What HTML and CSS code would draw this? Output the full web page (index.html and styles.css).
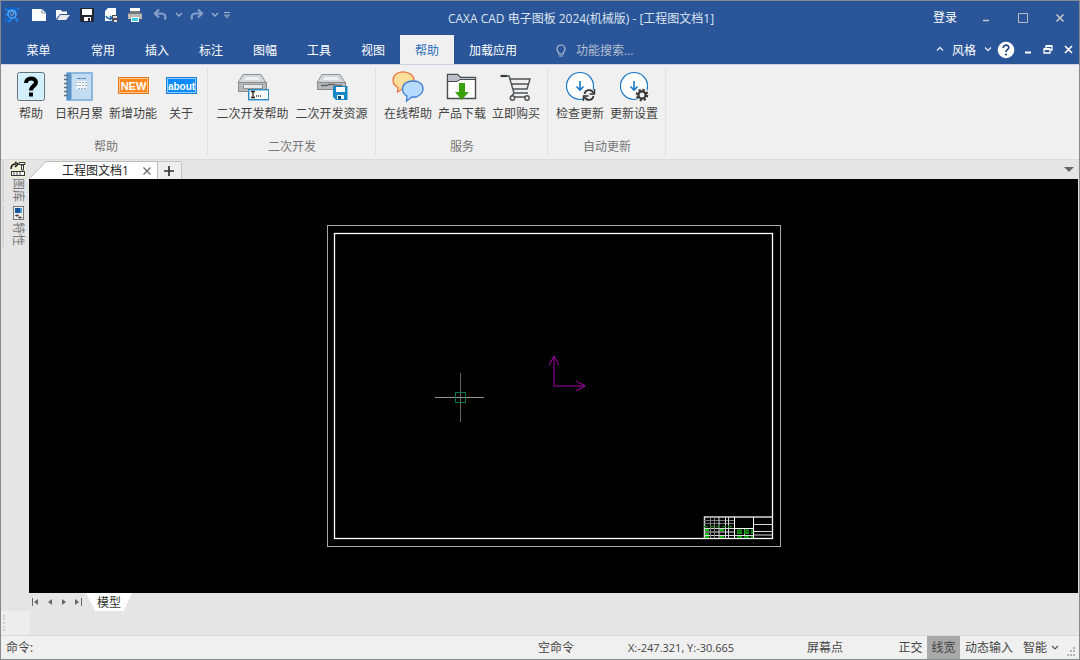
FILE: index.html
```html
<!DOCTYPE html>
<html lang="zh-CN">
<head>
<meta charset="utf-8">
<title>CAXA CAD 电子图板 2024(机械版)</title>
<link rel="stylesheet" href="styles.css">
</head>
<body>
<div class="window">
  <header class="titlebar">
    <svg class="app-logo" viewBox="0 0 16 16" width="16" height="16"><g fill="none" stroke="#1787f5" stroke-width="1.600"><path d="M1 2l5 2M1 8l4-1M1 14l5-4M14 15l-3-5M8 12l-4 3M15 2l-4 1"/><circle cx="8" cy="7" r="4" stroke="#48a8ff"/><path d="M6 6c1-2 4-2 4 0s-3 3-4 1" stroke="#8fd0ff" stroke-width="1"/><path d="M4 2c3-2 8-1 9 2M5 10l-3 3" stroke="#0a5fd0"/></g></svg>
    <nav class="quick">
      <button aria-label="新建"><svg viewBox="0 0 16 16" width="16" height="16"><path d="M1 2h10l4 4v8H1z" fill="#fff"/><path d="M11 2v4h4" fill="none" stroke="#7d8da8"/></svg></button>
      <button aria-label="打开"><svg viewBox="0 0 16 16" width="16" height="16"><path d="M1 3h5l1 1.500h5V7H5L1 12z" fill="#fff"/><path d="M5 8h10l-4 5H2z" fill="#e8e8e8"/></svg></button>
      <button aria-label="保存"><svg viewBox="0 0 16 16" width="16" height="16"><path d="M1 1h14v14H2l-1-1z" fill="#222831"/><path d="M3 2h10v6H3zM5 10h7v4H5z" fill="#fff"/><path d="M9 11h2v3H9z" fill="#222831"/></svg></button>
      <button aria-label="另存为"><svg viewBox="0 0 16 16" width="16" height="16"><path d="M2 4l3-3h8v13H2z" fill="#fff"/><path d="M3 9c1 3 4 3 5 2M7 9l2 2-2 2" fill="none" stroke="#1b67b5" stroke-width="1.500"/><path d="M9 8h6v7H9z" fill="#4a4f58"/><path d="M10 9h4v2h-4zM11 13h3v2h-3z" fill="#ddd"/></svg></button>
      <button aria-label="打印"><svg viewBox="0 0 16 16" width="16" height="16"><path d="M3 1h10v5H3z" fill="#fff"/><path d="M1 6h14v6H1z" fill="#b8b8b5"/><path d="M1 6h2V4h10v2h2v1H1z" fill="#777b80"/><path d="M4 10h8v5H4z" fill="#fff"/><path d="M5 11h6v3H5z" fill="#38cdea"/></svg></button>
      <button class="arrow" aria-label="撤销"><svg viewBox="0 0 16 16" width="16" height="16"><path d="M7 2.500L3 6.500l4 4" fill="none" stroke="#869fc9" stroke-width="2.200"/><path d="M3 6.500h6c4 0 5 2 4 6" fill="none" stroke="#869fc9" stroke-width="2.200"/></svg></button>
      <button class="narrow" aria-label="撤销列表"><svg viewBox="0 0 8 8" width="8" height="8"><path d="M1 2l3 3 3-3" fill="none" stroke="#9cb0d1" stroke-width="1.300"/></svg></button>
      <button aria-label="重做"><svg viewBox="0 0 16 16" width="16" height="16"><path d="M9 2.500l4 4-4 4" fill="none" stroke="#869fc9" stroke-width="2.200"/><path d="M13 6.500H7c-4 0-5 2-4 6" fill="none" stroke="#869fc9" stroke-width="2.200"/></svg></button>
      <button class="narrow" aria-label="重做列表"><svg viewBox="0 0 8 8" width="8" height="8"><path d="M1 2l3 3 3-3" fill="none" stroke="#9cb0d1" stroke-width="1.300"/></svg></button>
      <button class="narrow" aria-label="自定义"><svg viewBox="0 0 8 8" width="8" height="8"><path d="M1 1.500h6" stroke="#a9b3c5"/><path d="M1.500 4h5L4 7z" fill="none" stroke="#a9b3c5"/></svg></button>
    </nav>
    <h1 class="title">CAXA CAD 电子图板 2024(机械版) - [工程图文档1]</h1>
    <div class="window-buttons">
      <button class="login">登录</button>
      <button class="win" aria-label="最小化"><svg viewBox="0 0 12 12" width="12" height="12"><path d="M3 8.500h6" stroke="#c9c9c6" stroke-width="1.500"/></svg></button>
      <button class="win" aria-label="最大化"><svg viewBox="0 0 12 12" width="12" height="12"><path d="M1.500 1.500h9v9h-9z" fill="none" stroke="#b9bcc0"/></svg></button>
      <button class="win" aria-label="关闭"><svg viewBox="0 0 12 12" width="12" height="12"><path d="M2.500 2.500l7 7M9.500 2.500l-7 7" stroke="#c9c9c6" stroke-width="1.500"/></svg></button>
    </div>
  </header>

  <nav class="menubar">
    <button class="tab main">菜单</button>
    <button class="tab">常用</button>
    <button class="tab">插入</button>
    <button class="tab">标注</button>
    <button class="tab">图幅</button>
    <button class="tab">工具</button>
    <button class="tab">视图</button>
    <button class="tab active">帮助</button>
    <button class="tab wide">加载应用</button>
    <label class="search">
      <svg viewBox="0 0 12 14" width="12" height="14"><path d="M4 10c0-2-2-2.500-2-5a4 4 0 0 1 8 0c0 2.500-2 3-2 5zM4 12h4" fill="none" stroke="#b5bfd0" stroke-width="1.200"/></svg>
      <input type="text" placeholder="功能搜索..." aria-label="功能搜索">
    </label>
    <div class="menu-right">
      <button aria-label="折叠功能区"><svg viewBox="0 0 8 8" width="8" height="8"><path d="M1 4.500l3-3 3 3" fill="none" stroke="#dfe6f2" stroke-width="1.300"/></svg></button>
      <button class="style-button">风格</button>
      <button aria-label="风格列表"><svg viewBox="0 0 8 8" width="8" height="8"><path d="M1 1.500l3 3 3-3" fill="none" stroke="#dfe6f2" stroke-width="1.300"/></svg></button>
      <button class="help" aria-label="帮助"><svg viewBox="0 0 18 18" width="18" height="18"><circle cx="9" cy="9" r="8.300" fill="#fff"/><path d="M6.200 7c0-4 5.800-3.500 5.600-.3C11.700 8.500 9 8.500 9 11" fill="none" stroke="#1f4480" stroke-width="1.700"/><circle cx="9" cy="13.500" r="1.100" fill="#1f4480"/></svg></button>
      <button class="doc" aria-label="最小化文档"><svg viewBox="0 0 12 12" width="12" height="12"><path d="M3 8.500h6" stroke="#fff" stroke-width="2"/></svg></button>
      <button class="doc" aria-label="还原文档"><svg viewBox="0 0 12 12" width="12" height="12"><path d="M4 4V2h6v4H8M2 5h6v4H2z" fill="none" stroke="#fff" stroke-width="1.300"/><path d="M4 2h6M2 5h6" stroke="#fff" stroke-width="2"/></svg></button>
      <button class="doc" aria-label="关闭文档"><svg viewBox="0 0 12 12" width="12" height="12"><path d="M3 2l7 7M10 2L3 9" stroke="#fff" stroke-width="1.700"/></svg></button>
    </div>
  </nav>

  <section class="ribbon">
    <div class="group first">
      <div class="tools">
        <button class="tool"><svg viewBox="0 0 32 32" width="32" height="32"><rect x="2.500" y="1.500" width="27" height="28" rx="2" fill="#d2f0fd" stroke="#66727a"/><path d="M11 12c0-6 10-6 10-.5 0 3.500-5 3.500-5 8" fill="none" stroke="#000" stroke-width="4"/><rect x="14" y="21.500" width="4" height="4" fill="#000"/></svg><span>帮助</span></button>
        <button class="tool"><svg viewBox="0 0 32 32" width="32" height="32"><rect x="3" y="1" width="27" height="29" rx="1" fill="#8cb8df"/><rect x="9" y="3" width="19" height="25" fill="#c4dcf2"/><path d="M4 2h4v27H4z" fill="#5c93c9"/><path d="M1 4.500h4M1 8.500h4M1 12.500h4M1 16.500h4M1 20.500h4M1 24.500h4" stroke="#587891" stroke-width="1.500"/><path d="M14 7.500h9" stroke="#4e87bd" stroke-dasharray="4 1"/><path d="M13 10h11v8H13z" fill="#f2f6fa"/><path d="M13 11.500h11M13 14.500h11M15 17.500h9" stroke="#9badbd" stroke-dasharray="2 1"/></svg><span>日积月累</span></button>
        <button class="tool"><svg viewBox="0 0 32 32" width="32" height="32"><rect x="1" y="6" width="31" height="17" fill="#e87718"/><rect x="2.500" y="7.500" width="28" height="14" fill="#ff8820" stroke="#ffc38d"/><text x="16.500" y="18.500" text-anchor="middle" class="badge-text">NEW</text></svg><span>新增功能</span></button>
        <button class="tool"><svg viewBox="0 0 32 32" width="32" height="32"><rect x="1" y="6" width="31" height="17" fill="#1680dc"/><rect x="2.500" y="7.500" width="28" height="14" fill="#078bfa" stroke="#90cbfa"/><text x="16.500" y="18.500" text-anchor="middle" class="badge-text about">about</text></svg><span>关于</span></button>
      </div>
      <h2>帮助</h2>
    </div>
    <div class="group">
      <div class="tools">
        <button class="tool long"><svg viewBox="0 0 32 32" width="32" height="32"><path d="M6 3.500h18l5 8H1z" fill="#d5d6d8" stroke="#909296"/><path d="M9 6h12l2 3H7z" fill="#f2f2f2"/><rect x="1.500" y="11.500" width="28" height="9" fill="#b6b8ba" stroke="#898b8e"/><rect x="6.500" y="13.500" width="19" height="4" fill="#e8e8e8" stroke="#95979a"/><rect x="11.700" y="18.700" width="20" height="10" fill="#fff" stroke="#278ac0" stroke-width="1.400"/><path d="M14 20.500h4M16 20.500v6M14 26.500h4" stroke="#222" stroke-width="1.300"/><path d="M19 25h5" stroke="#333" stroke-width="1.500" stroke-dasharray="1 1"/></svg><span>二次开发帮助</span></button>
        <button class="tool long"><svg viewBox="0 0 32 32" width="32" height="32"><path d="M6 3.500h18l5 8H1z" fill="#d5d6d8" stroke="#909296"/><path d="M9 6h12l2 3H7z" fill="#f2f2f2"/><rect x="1.500" y="11.500" width="28" height="7" fill="#b6b8ba" stroke="#898b8e"/><path d="M5 14.500h6l2-1h5l2 1h6" fill="none" stroke="#626467" stroke-width="1.300"/><path d="M17 15h14.500v14H20l-3-3z" fill="#1686c6"/><path d="M20 16h9v5h-9zM21 24h7v4h-7z" fill="#fff"/><path d="M22 25h3v3h-3z" fill="#174d78"/></svg><span>二次开发资源</span></button>
      </div>
      <h2>二次开发</h2>
    </div>
    <div class="group">
      <div class="tools">
        <button class="tool"><svg viewBox="0 0 32 32" width="32" height="32"><path d="M11 .8c6 0 11 3.500 11 8.500s-5 8.500-11 8.500L5.500 21l.5-4.500C3 15 1 12.500 1 9.300 1 4.300 5 .8 11 .8z" fill="#ffdf99" stroke="#ed7640" stroke-width="1.300"/><path d="M21 10c6 0 10 3 10 8 0 3-2 5.500-5 7l-2 1h-4l-5.500 4 .5-5c-3-1.500-4.500-4-4.500-7 0-5 4.500-8 10.500-8z" fill="#b8dcff" stroke="#407dd2" stroke-width="1.300"/></svg><span>在线帮助</span></button>
        <button class="tool"><svg viewBox="0 0 32 32" width="32" height="32"><path d="M1.500 3.500h10l3 3h15v21h-28z" fill="#fff" stroke="#484c53" stroke-width="1.400"/><path d="M2 4h9l3 3h15v2H14l-3 2H2z" fill="#bcc0c6"/><path d="M2 10.500h9l3-2h15" fill="none" stroke="#484c53"/><path d="M13 12h6v9h4l-7.500 8L9 21h4z" fill="#3aa00b"/></svg><span>产品下载</span></button>
        <button class="tool"><svg viewBox="0 0 32 32" width="32" height="32"><g fill="none" stroke="#4e5157" stroke-width="1.400"><path d="M1 5h8l5 17h14M10 8h20l-3 10H13M11 13h18M14 22l-3 4h16"/><circle cx="12.500" cy="27" r="2.200" fill="#f0f0f0"/><circle cx="27" cy="27" r="2.200" fill="#f0f0f0"/></g><path d="M.5 5H7" stroke="#393c42" stroke-width="2.200"/></svg><span>立即购买</span></button>
      </div>
      <h2>服务</h2>
    </div>
    <div class="group">
      <div class="tools">
        <button class="tool"><svg viewBox="0 0 32 32" width="32" height="32"><circle cx="16" cy="15" r="13.500" fill="#fff" stroke="#1978c9" stroke-width="1.200"/><path d="M16 10v9M12.500 15.500L16 19l3.500-3.500" fill="none" stroke="#1978c9" stroke-width="1.600"/><circle cx="25" cy="24" r="7" fill="#f0f0f0"/><path d="M20.500 23c1-5 7-5 9-1M29.500 25c-1 5-7 5-9 1" fill="none" stroke="#333" stroke-width="1.700"/><path d="M30.500 18v5h-5M19.500 30v-5h5" fill="none" stroke="#333" stroke-width="1.400"/></svg><span>检查更新</span></button>
        <button class="tool"><svg viewBox="0 0 32 32" width="32" height="32"><circle cx="16" cy="15" r="13.500" fill="#fff" stroke="#1978c9" stroke-width="1.200"/><path d="M16 10v9M12.500 15.500L16 19l3.500-3.500" fill="none" stroke="#1978c9" stroke-width="1.600"/><circle cx="24" cy="24" r="7" fill="#f0f0f0"/><circle cx="24" cy="24" r="3.600" fill="none" stroke="#333" stroke-width="2.200"/><circle cx="24" cy="24" r="5.300" fill="none" stroke="#333" stroke-width="2" stroke-dasharray="2.100 2.063"/></svg><span>更新设置</span></button>
      </div>
      <h2>自动更新</h2>
    </div>
  </section>

  <main class="workspace">
    <aside class="sidebar">
      <button class="side-tab"><svg viewBox="0 0 16 16" width="16" height="16"><rect width="16" height="16" fill="#f0f1d5"/><path d="M1 8c0-4 2-5 5-5M5 1l3 2-3 3" fill="none" stroke="#111" stroke-width="1.500"/><path d="M9 1.500h6v2H9zM11.500 4h2v5h-2z" fill="#fff" stroke="#333"/><rect x="1.500" y="10.500" width="13" height="4" fill="#fff" stroke="#333"/><path d="M4 11v3M7 11v3M10 11v3" stroke="#555"/></svg><span>图库</span></button>
      <button class="side-tab"><svg viewBox="0 0 16 16" width="16" height="16"><rect x="3.500" y="1.500" width="10" height="13" fill="#eee" stroke="#777"/><rect x="5" y="3" width="5" height="5" fill="#17559c"/><path d="M10 3h2v5h-2z" fill="#4e9ad5"/><path d="M5 10.500h4M8 12.500h4M7 9v3M10 11v3" stroke="#555"/></svg><span>特性</span></button>
    </aside>
    <section class="document">
      <div class="doc-tabs">
        <svg class="slope" viewBox="0 0 18 18" width="18" height="18"><path d="M0 18L16 1.500Q17 .5 18 .5V18z" fill="#fff"/><path d="M0 18L16 1.500Q17 .5 18 .5" fill="none" stroke="#bdbdbd"/></svg>
        <div class="doc-tab"><button class="doc-name">工程图文档1</button><button class="doc-close" aria-label="关闭标签"><svg viewBox="0 0 10 10" width="10" height="10"><path d="M1.500 1.500l7 7M8.500 1.500l-7 7" stroke="#666" stroke-width="1.200"/></svg></button></div>
        <button class="doc-add" aria-label="新建文档"><svg viewBox="0 0 12 12" width="12" height="12"><path d="M6 1v10M1 6h10" stroke="#333" stroke-width="1.700"/></svg></button>
        <button class="doc-list" aria-label="文档列表"><svg viewBox="0 0 10 6" width="10" height="6"><path d="M0 0h10L5 5z" fill="#666"/></svg></button>
      </div>
      <svg class="canvas" viewBox="0 0 1049 414" preserveAspectRatio="xMidYMid meet">
        <rect x="298.500" y="46.500" width="453" height="321" fill="none" stroke="#a8a8a8"/>
        <rect x="305.500" y="54.500" width="438" height="305" fill="none" stroke="#fff" stroke-width="1.300"/>
        <g fill="none" stroke="#d8d8d8">
          <path d="M675.500 359.500v-21.500h68" stroke-width="1.500"/>
          <path d="M705.500 338v21M724.500 338v21" stroke="#fff"/>
          <path d="M724 345.500h20M724 352.500h20M724 356h20"/>
          <path d="M705 349.500h19" stroke="#fff"/>
          <path d="M675 341.500h30M675 344.500h30" stroke="#777"/>
          <path d="M675 349.500h30M675 353h30M675 356.500h30M690 338v21M696.500 338v21M699.500 338v21"/>
          <path d="M681.500 338v21M685.500 338v21" stroke="#888"/>
          <path d="M715.500 350v6M705 356.500h19"/>
        </g>
        <g fill="none" stroke="#087a08" stroke-width="1.500">
          <path d="M675 347.500h30" stroke-dasharray="4 2"/>
          <path d="M676 351h4M676 355h4M676 358h4M691 351h4M691 358h4" stroke="#10b510" stroke-width="2"/>
          <path d="M708 351.500h16M708 354h16M708 358h16" stroke="#0c960c" stroke-width="2" stroke-dasharray="5 2"/>
        </g>
        <path d="M431.500 194v49" stroke="#666"/>
        <path d="M406 218.500h49" stroke="#929292"/>
        <rect x="426.500" y="213.500" width="10" height="10" fill="none" stroke="#087b49"/>
        <path d="M525 177v30h30.500M520 186l5-9 5 9M547 202l9 5-9 5" fill="none" stroke="#a800a8"/>
      </svg>
      <div class="sheet-tabs">
        <button aria-label="首页"><svg viewBox="0 0 10 10" width="10" height="10"><path d="M1.500 1v8" stroke="#666"/><path d="M7 2v6L3 5z" fill="#666"/></svg></button>
        <button aria-label="上一页"><svg viewBox="0 0 10 10" width="10" height="10"><path d="M7 2v6L3 5z" fill="#666"/></svg></button>
        <button aria-label="下一页"><svg viewBox="0 0 10 10" width="10" height="10"><path d="M3 2v6l4-3z" fill="#666"/></svg></button>
        <button aria-label="末页"><svg viewBox="0 0 10 10" width="10" height="10"><path d="M2 2v6l4-3z" fill="#666"/><path d="M8.500 1v8" stroke="#666"/></svg></button>
        <button class="sheet">模型</button>
      </div>
    </section>
  </main>
  <div class="dock"><div class="dock-bar"></div></div>

  <footer class="status">
    <label class="command">命令:<input type="text" aria-label="命令"></label>
    <span class="state">空命令</span>
    <output class="coords">X:-247.321, Y:-30.665</output>
    <span class="point">屏幕点</span>
    <button>正交</button>
    <button class="on">线宽</button>
    <button class="dynamic">动态输入</button>
    <button class="snap">智能 <svg viewBox="0 0 8 8" width="8" height="8"><path d="M1 2l3 3 3-3" fill="none" stroke="#555" stroke-width="1.200"/></svg></button>
    <svg class="grip" viewBox="0 0 10 10" width="10" height="10"><path d="M7 0h2v2H7zM4 3h2v2H4zM7 3h2v2H7zM1 7h2v2H1zM4 7h2v2H4zM7 7h2v2H7z" fill="#b5b5b5"/></svg>
  </footer>
</div>
</body>
</html>
```
FILE: styles.css
```css
* { box-sizing: border-box; }
body {
  margin: 0;
  font: 12px/18px "Open Sans", "Noto Sans CJK SC", sans-serif;
  color: #444;
}
button, input {
  margin: 0;
  padding: 0;
  border: 0;
  background: none;
  font: inherit;
  color: inherit;
  white-space: nowrap;
}
svg { display: block; flex: none; }
h1, h2 { margin: 0; font: inherit; }

.window {
  display: flex;
  flex-direction: column;
  min-height: 100vh;
  border: 1px solid #858a91;
  background: #e5e5e5;
}

/* Title bar */
.titlebar {
  display: flex;
  height: 34px;
  padding-left: 3px;
  background: #2a5699;
  color: #dce3ee;
}
.app-logo { margin-top: 6px; }
.quick {
  display: flex;
  align-items: center;
  height: 28px;
  padding-left: 7px;
}
.quick button { display: grid; place-items: center; width: 24px; height: 24px; }
.quick .arrow { width: 26px; }
.quick .narrow { width: 12px; }
.title { flex: 1; padding-top: 9px; text-align: center; }
.window-buttons { display: flex; height: 34px; align-items: center; }
.login { width: 32px; color: #fff; }
.win { display: grid; place-items: center; width: 37px; height: 34px; }
.window-buttons .login { margin-right: 6px; }
.window-buttons { padding-right: 1px; }

/* Menu bar */
.menubar {
  display: flex;
  height: 29px;
  background: #2a5699;
  color: #fff;
}
.tab { width: 54px; padding-top: 2px; }
.tab.main { width: 75px; }
.tab.wide { width: 78px; }
.tab.active { background: #f0f0f0; color: #2a6ebb; }
.search {
  display: flex;
  flex: 1;
  align-items: center;
  gap: 9px;
  padding: 2px 0 0 23px;
}
.search input { width: 160px; outline: 0; }
.search input::placeholder { color: #b5bfd0; opacity: 1; }
.menu-right { display: flex; align-items: center; padding-right: 1px; }
.style-button { width: 40px; padding-top: 2px; }
.help { margin: 0 3px 0 5px; }
.doc { display: grid; place-items: center; width: 20px; height: 24px; }

/* Ribbon */
.ribbon {
  display: flex;
  height: 96px;
  padding: 2px 0 3px;
  border-top: 1px solid #c9d3e2;
  border-bottom: 1px solid #dcdcdc;
  background: #f0f0f0;
}
.group {
  display: flex;
  flex-direction: column;
  justify-content: space-between;
  padding: 4px 4px 0 5px;
  border-right: 1px solid #e2e2e2;
}
.group.first { padding: 4px 5px 0 9px; }
.tools { display: flex; }
.tool {
  display: flex;
  flex-direction: column;
  align-items: center;
  gap: 2px;
  min-width: 42px;
  padding: 0 3px;
}
.tool.long { min-width: 79px; }
.group h2 { color: #777; text-align: center; }
.badge-text { font: bold 11px "Liberation Sans", sans-serif; fill: #fff; }
.badge-text.about { font-size: 10px; }

/* Workspace */
.workspace { display: flex; flex: 1; min-height: 0; }
.sidebar {
  display: flex;
  flex-direction: column;
  gap: 2px;
  width: 28px;
  padding-top: 1px;
}
.side-tab {
  display: flex;
  flex-direction: column;
  align-items: center;
  width: 25px;
  padding-left: 5px;
  border-left: 2px solid #d5d5d5;
  margin-left: 1px;
}
.side-tab span {
  writing-mode: vertical-rl;
  text-orientation: sideways;
  line-height: 16px;
  padding: 1px 0;
  color: #777;
}
.document { display: flex; flex: 1; flex-direction: column; min-width: 0; padding-right: 1px; }
.doc-tabs { display: flex; height: 19px; padding-top: 1px; }
.doc-tab {
  display: flex;
  align-items: center;
  gap: 13px;
  padding: 0 5px 0 15px;
  border-top: 1px solid #bdbdbd;
  border-right: 1px solid #bdbdbd;
  background: #fff;
  color: #222;
}
.doc-add {
  display: grid;
  place-items: center;
  width: 24px;
  border: 1px solid #c4c4c4;
  border-width: 1px 1px 0 0;
  border-radius: 0 2px 0 0;
  background: #eee;
}
.doc-list { margin-left: auto; padding-right: 4px; }
.canvas { flex: 1; width: 100%; min-height: 0; background: #000; }
.sheet-tabs { display: flex; height: 18px; }
.sheet-tabs button { display: grid; place-items: center; width: 14px; }
.sheet-tabs .sheet {
  width: 46px;
  margin-left: 1px;
  padding-top: 1px;
  background: #fff;
  clip-path: polygon(0 0, 100% 0, 82% 100%, 20% 100%);
  color: #333;
}
.dock { height: 25px; border-bottom: 1px solid #dadada; }
.dock-bar { width: 29px; height: 24px; padding: 4px 2px; background: #ededed; }
.dock-bar::before {
  content: "";
  display: block;
  height: 16px;
  width: 2px;
  border-left: 2px dotted #cfcfcf;
}

/* Status bar */
.status { display: flex; height: 23px; align-items: center; background: #f0f0f0; }
.command { display: flex; flex: 1; padding-left: 5px; }
.command input { flex: 1; min-width: 0; outline: 0; }
.state { width: 90px; }
.coords { width: 179px; font-size: 11px; }
.point { width: 87px; }
.status button { width: 33px; height: 100%; }
.status .on { background: #a9a9a9; }
.status .dynamic { width: 58px; }
.status .snap { display: flex; align-items: center; justify-content: center; gap: 4px; width: 46px; }
.grip { align-self: flex-end; margin: 0 3px 2px 2px; }
```
